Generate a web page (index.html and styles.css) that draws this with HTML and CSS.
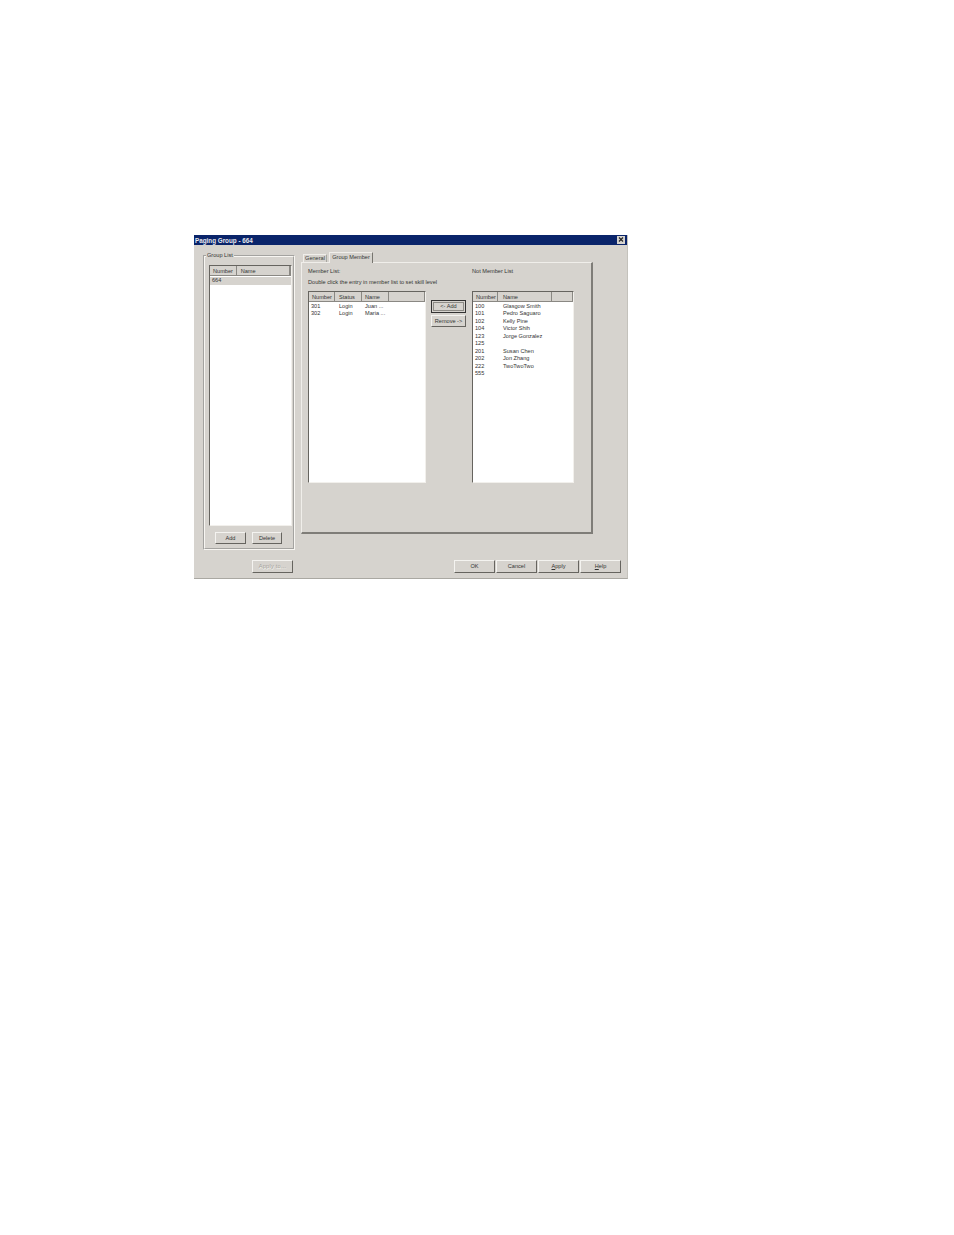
FILE: index.html
```html
<!DOCTYPE html>
<html lang="en">
<head>
    <meta charset="UTF-8">
    <title>Paging Group - 664</title>
    <link rel="stylesheet" href="styles.css">
</head>
<body>
    <div class="dialog">
        <div class="titlebar">
            <span>Paging Group - 664</span>
            <button class="close-btn" type="button">
                <svg viewBox="0 0 8 7" width="8" height="7"><path d="M2 1.5 L6 5.5 M6 1.5 L2 5.5" stroke="#222" stroke-width="1.1" fill="none"/></svg>
            </button>
        </div>

        <div class="main">
            <fieldset class="group-box">
                <legend>Group List</legend>
                <div class="list group-list">
                    <div class="list-header">
                        <span class="col-g1">Number</span>
                        <span class="col-g2">Name</span>
                    </div>
                    <div class="list-row selected"><span class="col-g1">664</span></div>
                </div>
                <div class="group-buttons">
                    <button class="btn btn-add" type="button">Add</button>
                    <button class="btn btn-delete" type="button">Delete</button>
                </div>
            </fieldset>

            <div class="tabs">
                <div class="tab-strip">
                    <div class="tab">General</div>
                    <div class="tab active">Group Member</div>
                </div>
                <div class="tab-panel">
                    <div class="member-col">
                        <div class="caption">Member List:</div>
                        <div class="caption hint">Double click the entry in member list to set skill level</div>
                        <div class="list member-list">
                            <div class="list-header">
                                <span class="col-m1">Number</span>
                                <span class="col-m2">Status</span>
                                <span class="col-m3">Name</span>
                            </div>
                            <div class="list-row"><span class="col-m1">301</span><span class="col-m2">Login</span><span class="col-m3">Juan ...</span></div>
                            <div class="list-row"><span class="col-m1">302</span><span class="col-m2">Login</span><span class="col-m3">Maria ...</span></div>
                        </div>
                    </div>
                    <div class="move-buttons">
                        <button class="btn btn-default" type="button"><span class="focus-box">&lt;- Add</span></button>
                        <button class="btn btn-move" type="button">Remove -&gt;</button>
                    </div>
                    <div class="not-member-col">
                        <div class="caption">Not Member List</div>
                        <div class="list not-member-list">
                            <div class="list-header">
                                <span class="col-n1">Number</span>
                                <span class="col-n2">Name</span>
                            </div>
                            <div class="list-row"><span class="col-n1">100</span><span class="col-n2">Glasgow Smith</span></div>
                            <div class="list-row"><span class="col-n1">101</span><span class="col-n2">Pedro Saguaro</span></div>
                            <div class="list-row"><span class="col-n1">102</span><span class="col-n2">Kelly Pine</span></div>
                            <div class="list-row"><span class="col-n1">104</span><span class="col-n2">Victor Shih</span></div>
                            <div class="list-row"><span class="col-n1">123</span><span class="col-n2">Jorge Gonzalez</span></div>
                            <div class="list-row"><span class="col-n1">125</span></div>
                            <div class="list-row"><span class="col-n1">201</span><span class="col-n2">Susan Chen</span></div>
                            <div class="list-row"><span class="col-n1">202</span><span class="col-n2">Jon Zhang</span></div>
                            <div class="list-row"><span class="col-n1">222</span><span class="col-n2">TwoTwoTwo</span></div>
                            <div class="list-row"><span class="col-n1">555</span></div>
                        </div>
                    </div>
                </div>
            </div>
        </div>

        <div class="footer">
            <button class="btn btn-foot btn-apply-to" type="button" disabled>Apply to...</button>
            <div class="footer-right">
                <button class="btn btn-foot" type="button">OK</button>
                <button class="btn btn-foot" type="button">Cancel</button>
                <button class="btn btn-foot" type="button"><u>A</u>pply</button>
                <button class="btn btn-foot" type="button"><u>H</u>elp</button>
            </div>
        </div>
    </div>
</body>
</html>
```

FILE: styles.css
```css
* {
    box-sizing: border-box;
    margin: 0;
    padding: 0;
}

body {
    background: #fff;
    padding: 235px 0 0 194px;
    font-family: "Liberation Sans", Arial, sans-serif;
    font-size: 5.6px;
    color: #333;
}

.dialog {
    width: 434px;
    height: 344px;
    background: #d6d3ce;
    border-bottom: 1px solid #aaa8a2;
    border-right: 1px solid #c4c2bc;
}

.titlebar {
    height: 10px;
    background: #0a246a;
    color: #e8e8ee;
    font-size: 6.3px;
    font-weight: bold;
    line-height: 11px;
    padding: 0 2px 0 1px;
    display: flex;
    justify-content: space-between;
    align-items: center;
}

.close-btn {
    width: 8px;
    height: 8px;
    background: #d6d3ce;
    border: none;
    display: flex;
}

.main {
    display: flex;
    gap: 6px;
    padding: 6px 0 0 9px;
}

/* left group box */
.group-box {
    width: 92px;
    height: 298px;
    margin-top: 1px;
    border: 2px groove #f8f6f2;
    padding: 0 1px 0 4px;
    min-width: 0;
}

.group-box legend {
    margin-left: -3px;
    padding: 0 1px;
    line-height: 7px;
}

.list {
    background: #fff;
    border-style: solid;
    border-width: 1px;
    border-color: #66645f #f2f0ec #f2f0ec #66645f;
}

.list-header {
    display: flex;
    height: 10px;
    background: #d6d3ce;
    line-height: 10px;
    border-bottom: 1px solid #8a8883;
    border-right: 1px solid #8a8883;
}

.list-header span {
    padding-left: 3px;
    border-right: 1px solid #8a8883;
    white-space: nowrap;
}

.list-row {
    display: flex;
    height: 7.45px;
    line-height: 7.45px;
    white-space: nowrap;
}

.list-row span {
    padding-left: 3px;
}

.list-header + .list-row {
    margin-top: 1px;
}

.selected {
    background: #d6d3ce;
    height: 8px;
}

.group-list {
    height: 261px;
    margin-top: 6px;
}

.col-g1 { width: 27px; }
.col-g2 { width: 54px; }
.col-m1 { width: 26px; }
.col-m2 { width: 27px; }
.col-m3 { width: 27px; }
.col-n1 { width: 25px; }
.col-n2 { width: 54px; }

.list-row .col-g1 { padding-left: 2px; }
.list-row .col-m1 { padding-left: 2px; }
.list-row .col-n1 { padding-left: 2px; }
.list-row .col-m2 { padding-left: 4px; }
.list-header .col-g2 { padding-left: 4px; }
.list-header .col-m2 { padding-left: 4px; }
.list-header .col-n2 { padding-left: 5px; }
.list-row .col-n2 { padding-left: 5px; }

.btn {
    background: #d6d3ce;
    font: inherit;
    color: inherit;
    border-style: solid;
    border-width: 1px;
    border-color: #f4f3f0 #66645f #66645f #f4f3f0;
    text-align: center;
}

.group-buttons {
    display: flex;
    gap: 6px;
    margin: 6px 0 0 6px;
}

.btn-add { width: 31px; height: 12px; }
.btn-delete { width: 30px; height: 12px; }

/* tabs */
.tabs {
    width: 292px;
}

.tab-strip {
    display: flex;
    align-items: flex-end;
    height: 11px;
    padding-left: 2px;
    gap: 2px;
}

.tab {
    height: 8px;
    width: 24px;
    line-height: 7px;
    text-align: center;
    border: 1px solid #f0eeea;
    border-bottom: none;
    border-right-color: #a8a6a0;
}

.tab.active {
    height: 11px;
    width: 44px;
    line-height: 8px;
    background: #d6d3ce;
    border-right-color: #77756f;
    position: relative;
    top: 1px;
}

.tab-panel {
    height: 272px;
    display: flex;
    padding: 4px 0 0 6px;
    border-style: solid;
    border-width: 1px 2px 2px 1px;
    border-color: #f0eeea #7f7d78 #7f7d78 #f0eeea;
}

.member-col {
    width: 118px;
}

.caption {
    height: 8px;
    line-height: 8px;
}

.hint {
    margin-top: 3px;
    white-space: nowrap;
}

.member-list {
    height: 192px;
    margin-top: 5px;
}

.move-buttons {
    width: 46px;
    padding: 33px 0 0 5px;
    display: flex;
    flex-direction: column;
    gap: 2px;
}

.btn-default {
    width: 35px;
    height: 13px;
    border-color: #333;
    padding: 1px;
    display: flex;
}

.focus-box {
    flex: 1;
    border: 1px solid #8d8b86;
    line-height: 7px;
}

.btn-move {
    width: 35px;
    height: 12px;
}

.not-member-col {
    width: 102px;
}

.not-member-list {
    height: 192px;
    margin-top: 16px;
}

/* bottom buttons */
.footer {
    display: flex;
    justify-content: space-between;
    margin-top: 10px;
    padding: 0 6px 0 58px;
}

.footer-right {
    display: flex;
    gap: 1px;
}

.btn-foot {
    width: 41px;
    height: 12.5px;
}

.btn-apply-to {
    color: #a3a19b;
    letter-spacing: 0.25px;
    text-shadow: 0.5px 0.5px 0 #f4f3f0;
}
```
